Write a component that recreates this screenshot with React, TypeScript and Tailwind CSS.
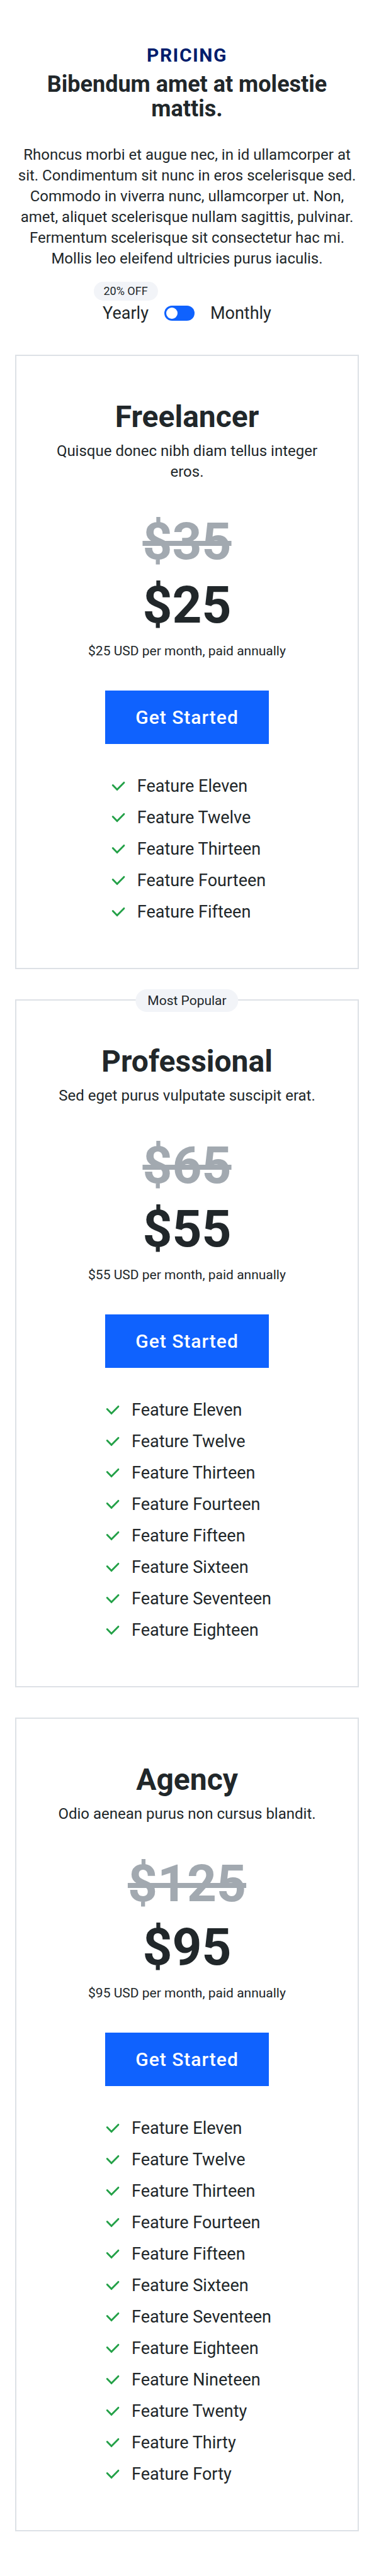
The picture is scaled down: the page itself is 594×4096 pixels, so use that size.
type Plan = {
  name: string;
  description: string;
  oldPrice: string;
  price: string;
  note: string;
  features: string[];
  popular?: boolean;
};

const FEATURES = [
  "Feature Eleven",
  "Feature Twelve",
  "Feature Thirteen",
  "Feature Fourteen",
  "Feature Fifteen",
  "Feature Sixteen",
  "Feature Seventeen",
  "Feature Eighteen",
  "Feature Nineteen",
  "Feature Twenty",
  "Feature Thirty",
  "Feature Forty",
];

const PLANS: Plan[] = [
  {
    name: "Freelancer",
    description: "Quisque donec nibh diam tellus integer eros.",
    oldPrice: "$35",
    price: "$25",
    note: "$25 USD per month, paid annually",
    features: FEATURES.slice(0, 5),
  },
  {
    name: "Professional",
    description: "Sed eget purus vulputate suscipit erat.",
    oldPrice: "$65",
    price: "$55",
    note: "$55 USD per month, paid annually",
    features: FEATURES.slice(0, 8),
    popular: true,
  },
  {
    name: "Agency",
    description: "Odio aenean purus non cursus blandit.",
    oldPrice: "$125",
    price: "$95",
    note: "$95 USD per month, paid annually",
    features: FEATURES,
  },
];

function CheckIcon() {
  return (
    <svg
      viewBox="0 0 32 32"
      className="size-8 shrink-0 text-[#24a148]"
      fill="none"
      stroke="currentColor"
      strokeWidth="2.9"
      strokeLinecap="round"
      strokeLinejoin="round"
      aria-hidden="true"
    >
      <path d="M7.2 14.6L14 21.6L24.9 10.4" />
    </svg>
  );
}

function PlanCard({ plan }: { plan: Plan }) {
  return (
    <article className="relative flex flex-col items-center border-2 border-[#dde1e6] px-12 pt-[69px] pb-16">
      {plan.popular && (
        <span className="absolute top-0 left-1/2 -translate-x-1/2 -translate-y-1/2 rounded-full bg-[#f2f4f8] px-[19px] text-[21px] leading-9 whitespace-nowrap">
          Most Popular
        </span>
      )}
      <h3 className="text-5xl leading-14 font-bold">{plan.name}</h3>
      <p className="mt-2.5 text-2xl leading-[33px]">{plan.description}</p>
      <div className="mt-11 flex flex-col text-[82px] leading-[101px] font-bold">
        <s className="text-[#a2a9b0]">{plan.oldPrice}</s>
        <span>{plan.price}</span>
      </div>
      <p className="mt-1.5 text-[21px] leading-8">{plan.note}</p>
      <button
        type="button"
        className="mt-[47px] bg-[#0f62fe] px-12 text-[30px] leading-[85px] font-medium tracking-[1px] text-white"
      >
        Get Started
      </button>
      <ul className="mt-[42px] text-left text-[27px] leading-[50px]">
        {plan.features.map((feature) => (
          <li key={feature} className="flex items-center gap-3.5">
            <CheckIcon />
            {feature}
          </li>
        ))}
      </ul>
    </article>
  );
}

export default function App() {
  return (
    <main className="bg-white px-6 pt-[68px] pb-[71px] text-center font-['Roboto',sans-serif] text-[#21272a]">
      <header>
        <p className="text-[30px] leading-10 font-bold tracking-wider text-[#001d6c]">PRICING</p>
        <h2 className="mt-[7px] text-4xl leading-[39px] font-bold">Bibendum amet at molestie mattis.</h2>
        <p className="mt-[37px] text-2xl leading-[33px]">
          Rhoncus morbi et augue nec, in id ullamcorper at sit. Condimentum sit nunc in eros scelerisque sed. Commodo
          in viverra nunc, ullamcorper ut. Non, amet, aliquet scelerisque nullam sagittis, pulvinar. Fermentum
          scelerisque sit consectetur hac mi. Mollis leo eleifend ultricies purus iaculis.
        </p>
      </header>
      <div className="mt-[50px] flex items-center justify-center gap-[25px] text-[27px] leading-10">
        <span className="relative">
          <span className="absolute bottom-full left-1/2 -translate-x-1/2 rounded-full bg-[#f2f4f8] px-4 text-lg leading-[30px] whitespace-nowrap">
            20% OFF
          </span>
          Yearly
        </span>
        <input
          id="billing"
          type="checkbox"
          role="switch"
          className="h-6 w-12 cursor-pointer appearance-none rounded-full bg-[#0f62fe] p-[3px] before:block before:size-[18px] before:rounded-full before:bg-white checked:before:ml-6"
        />
        <label htmlFor="billing">Monthly</label>
      </div>
      <section className="mt-[46px] flex flex-col gap-12">
        {PLANS.map((plan) => (
          <PlanCard key={plan.name} plan={plan} />
        ))}
      </section>
    </main>
  );
}
